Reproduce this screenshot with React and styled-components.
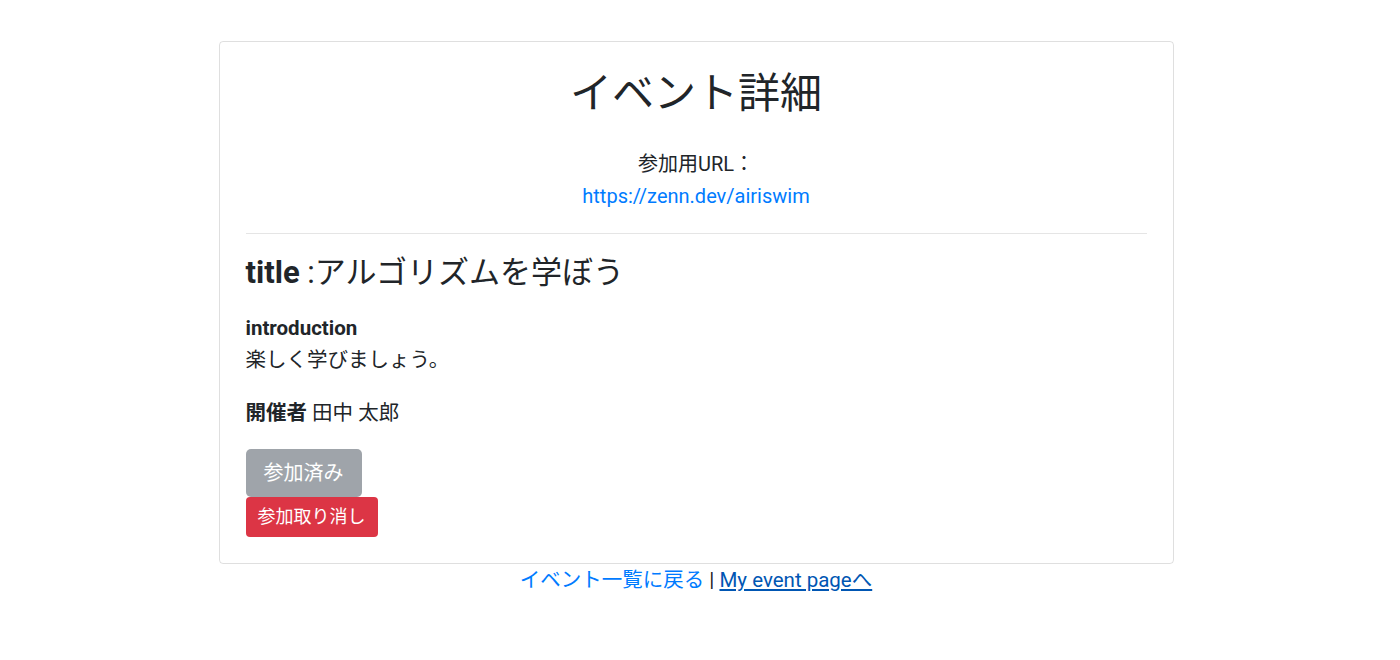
import React from 'react';
import styled, { createGlobalStyle } from 'styled-components';

const GlobalStyle = createGlobalStyle`
    body {
        margin: 0;
        background: #fff;
        color: #212529;
        font-family: Roboto, "Noto Sans CJK JP", sans-serif;
        font-size: 20px;
        line-height: 1.5;
    }
`;

const Page = styled.main`
    /* centred column, 8px gutter on the right like the original scrollbar */
    display: flex;
    flex-direction: column;
    align-items: center;
    padding: 41px 8px 0 0;
`;

const Card = styled.section`
    width: 955px;
    box-sizing: border-box;
    border: 1px solid rgba(0, 0, 0, 0.125);
    border-radius: 4px;
    padding: 26px;

    display: flex;
    flex-direction: column;
    align-items: flex-start;
`;

const PageTitle = styled.h1`
    align-self: stretch;
    margin: 2px 0 0;
    text-align: center;
    font-size: 42px;
    font-weight: 400;
    line-height: 48px;
`;

const UrlBlock = styled.div`
    align-self: stretch;
    margin-top: 30px;
    text-align: center;
    line-height: 32px;
`;

const Link = styled.a`
    color: ${(p) => (p.$dark ? '#0056b3' : '#007bff')};
    text-decoration: ${(p) => (p.$underline ? 'underline' : 'none')};
`;

const Divider = styled.hr`
    align-self: stretch;
    margin: 21px 0 21px;
    border: 0;
    border-top: 1px solid rgba(0, 0, 0, 0.1);
`;

const EventTitle = styled.h4`
    margin: 0 0 22px;
    font-size: 31px;
    font-weight: 400;
    line-height: 36px;

    b {
        font-weight: 700;
    }
`;

const Block = styled.div`
    margin-bottom: ${(p) => p.$gap || 20}px;
    font-size: 20.5px;
    line-height: 30px;

    b {
        font-weight: 700;
    }
`;

const Intro = styled.div`
    margin-top: 1px;
    line-height: 32px;
`;

const Button = styled.button`
    border: 1px solid transparent;
    border-radius: ${(p) => (p.$large ? 5 : 4)}px;
    color: #fff;
    font-family: inherit;
    font-size: ${(p) => (p.$large ? 20 : 18)}px;
    line-height: ${(p) => (p.$large ? 30 : 26)}px;
    padding: ${(p) => (p.$large ? '8px 17px' : '6px 11px')};
    background: ${(p) => p.$bg};
    opacity: ${(p) => (p.disabled ? 0.65 : 1)};
`;

const Footer = styled.div`
    margin-top: 1px;
    font-size: 20.5px;
    line-height: 30px;
    text-align: center;
`;

const App = () => {
    return (
        <>
            <GlobalStyle />
            <Page>
                <Card>
                    <PageTitle>イベント詳細</PageTitle>

                    <UrlBlock>
                        <div>参加用URL：</div>
                        <Link href="#">https://zenn.dev/airiswim</Link>
                    </UrlBlock>

                    <Divider />

                    <EventTitle>
                        <b>title</b> :アルゴリズムを学ぼう
                    </EventTitle>

                    <Block $gap={22}>
                        <b>introduction</b>
                        <Intro>楽しく学びましょう。</Intro>
                    </Block>

                    <Block $gap={21}>
                        <b>開催者</b> 田中 太郎
                    </Block>

                    <Button $large $bg="#6c757d" disabled>
                        参加済み
                    </Button>
                    <Button $bg="#dc3545">参加取り消し</Button>
                </Card>

                <Footer>
                    <Link href="#">イベント一覧に戻る</Link> |{' '}
                    <Link href="#" $dark $underline>
                        My event pageへ
                    </Link>
                </Footer>
            </Page>
        </>
    );
};

export default App;
